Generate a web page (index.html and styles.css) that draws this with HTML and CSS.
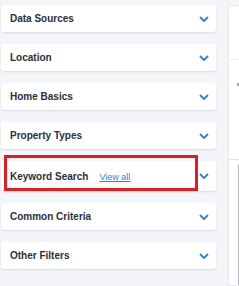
FILE: index.html
```html
<!DOCTYPE html>
<html>
<head>
<meta charset="utf-8">
<link rel="stylesheet" href="styles.css">
</head>
<body>
<div class="page">
  <div class="filters">
    <div class="card"><span class="title">Data Sources</span><svg class="chev" width="10" height="6" viewBox="0 0 10 6"><path d="M1 1 L5 5 L9 1" fill="none" stroke="#2f7ff0" stroke-width="1.9"/></svg></div>
    <div class="card"><span class="title">Location</span><svg class="chev" width="10" height="6" viewBox="0 0 10 6"><path d="M1 1 L5 5 L9 1" fill="none" stroke="#2f7ff0" stroke-width="1.9"/></svg></div>
    <div class="card"><span class="title">Home Basics</span><svg class="chev" width="10" height="6" viewBox="0 0 10 6"><path d="M1 1 L5 5 L9 1" fill="none" stroke="#2f7ff0" stroke-width="1.9"/></svg></div>
    <div class="card"><span class="title">Property Types</span><svg class="chev" width="10" height="6" viewBox="0 0 10 6"><path d="M1 1 L5 5 L9 1" fill="none" stroke="#2f7ff0" stroke-width="1.9"/></svg></div>
    <div class="card card-tall"><span class="title-wrap"><span class="title">Keyword Search</span><a class="link">View all</a></span><svg class="chev" width="10" height="6" viewBox="0 0 10 6"><path d="M1 1 L5 5 L9 1" fill="none" stroke="#2f7ff0" stroke-width="1.9"/></svg></div>
    <div class="card"><span class="title">Common Criteria</span><svg class="chev" width="10" height="6" viewBox="0 0 10 6"><path d="M1 1 L5 5 L9 1" fill="none" stroke="#2f7ff0" stroke-width="1.9"/></svg></div>
    <div class="card"><span class="title">Other Filters</span><svg class="chev" width="10" height="6" viewBox="0 0 10 6"><path d="M1 1 L5 5 L9 1" fill="none" stroke="#2f7ff0" stroke-width="1.9"/></svg></div>
  </div>
  <div class="panel">
    <div class="panel-top"></div>
    <div class="panel-mid"><span class="dot"></span></div>
    <div class="panel-low"><div class="inner"></div></div>
  </div>
</div>
<div class="highlight"></div>
</body>
</html>
```
FILE: styles.css
```css
html, body {
  margin: 0;
  padding: 0;
  background: #f4f5f9;
  overflow: hidden;
  width: 239px;
  height: 286px;
  font-family: "Liberation Sans", Arial, sans-serif;
}
.page {
  display: flex;
  padding-top: 5px;
  height: 281px;
}
.filters {
  width: 215px;
  margin-left: 1px;
  flex-shrink: 0;
  display: flex;
  flex-direction: column;
  gap: 12px;
}
.card {
  height: 27px;
  background: #fff;
  border-radius: 3px;
  box-shadow: 0 1px 2px rgba(30, 40, 70, 0.12);
  display: flex;
  align-items: center;
  justify-content: space-between;
  padding: 0 7px 0 9px;
  box-sizing: border-box;
}
.card-tall {
  height: 30px;
}
.title {
  font-size: 10px;
  font-weight: bold;
  color: #2b2f3a;
}
.title-wrap {
  display: flex;
  align-items: baseline;
  gap: 11px;
}
.link {
  font-size: 9px;
  color: #2f7ff0;
  text-decoration: underline;
}
.chev {
  display: block;
}
.panel {
  margin-left: 12px;
  flex: 1;
  min-width: 0;
  background: #fff;
  border: 1px solid #e6e8ee;
  border-right: none;
  border-radius: 3px 0 0 0;
  display: flex;
  flex-direction: column;
}
.panel-top {
  height: 57px;
  border-bottom: 1px solid #eceef3;
}
.panel-mid {
  height: 108px;
  border-bottom: 1px solid #e2e4ea;
  position: relative;
}
.dot {
  position: absolute;
  left: 8px;
  top: 23px;
  width: 2px;
  height: 3px;
  background: #c9a37a;
}
.panel-low {
  flex: 1;
  padding: 4px 0 0 9px;
}
.inner {
  height: 120px;
  border-left: 1px solid #b9b6cc;
  border-top: 1px solid #e0e2e8;
}
.highlight {
  position: absolute;
  left: 4px;
  top: 155px;
  width: 194px;
  height: 36px;
  box-sizing: border-box;
  border: 3px solid #e31b23;
}
```
